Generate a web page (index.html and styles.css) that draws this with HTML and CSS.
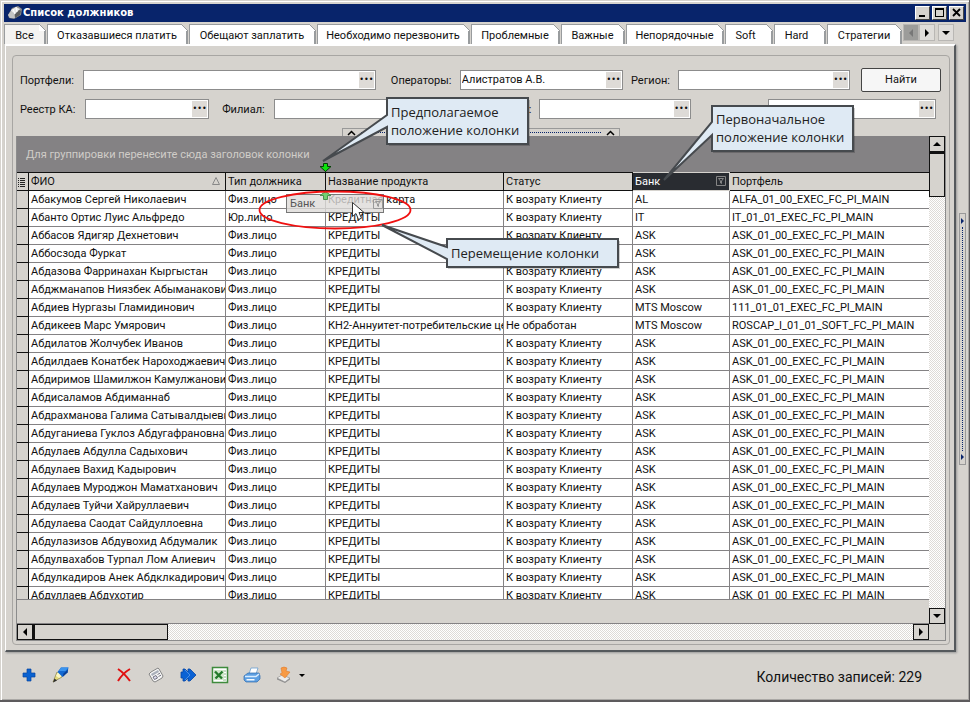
FILE: index.html
```html
<!DOCTYPE html>
<html lang="ru">
<head>
<meta charset="utf-8">
<title>Список должников</title>
<link rel="stylesheet" href="styles.css">
</head>
<body>
<div class="window">
  <header class="titlebar">
    <svg class="app-icon" width="16" height="16" viewBox="0 0 16 16"><path d="M1 10L5 3l6-2 4 3-1 6-7 4-5-1z" fill="#8d8d8d"/><path d="M4 5l5-3 4 2-4 5-4 1z" fill="#e9e9e9"/><path d="M1 10l3-4 3 2 1 5-5 0z" fill="#c4c4c4"/><path d="M8 9l4-4 2 1-1 4-5 3z" fill="#5d5d5d"/><path d="M6 4l2 5M9 2l1 5" stroke="#fff" fill="none"/></svg>
    <h1>Список должников</h1>
    <div class="winbtns">
      <button aria-label="Свернуть"><svg width="14" height="12" viewBox="0 0 14 12"><path d="M3 8h6v2H3z"/></svg></button>
      <button aria-label="Развернуть"><svg width="14" height="12" viewBox="0 0 14 12"><path d="M2 1h9v9H2zM3 3v6h7V3z" fill-rule="evenodd"/></svg></button>
      <button class="close" aria-label="Закрыть"><svg width="14" height="12" viewBox="0 0 14 12"><path d="M3 2l7 7M10 2l-7 7" stroke="#000" stroke-width="1.8"/></svg></button>
    </div>
  </header>
  <nav class="tabs">
    <button class="tab t1 active">Все</button>
    <button class="tab t2">Отказавшиеся платить</button>
    <button class="tab t3">Обещают заплатить</button>
    <button class="tab t4">Необходимо перезвонить</button>
    <button class="tab t5">Проблемные</button>
    <button class="tab t6">Важные</button>
    <button class="tab t7">Непорядочные</button>
    <button class="tab t8">Soft</button>
    <button class="tab t9">Hard</button>
    <button class="tab t10">Стратегии</button>
    <div class="tabnav">
      <button class="off" aria-label="Назад"><svg width="14" height="14" viewBox="0 0 14 14"><path d="M9 3v8L5 7z" fill="#777"/></svg></button>
      <button aria-label="Вперёд"><svg width="14" height="14" viewBox="0 0 14 14"><path d="M5 3v8l4-4z"/></svg></button>
      <button class="list" aria-label="Список вкладок"><svg width="14" height="14" viewBox="0 0 14 14"><path d="M3 5h8L7 9z"/></svg></button>
    </div>
  </nav>
  <div class="middle">
    <main class="panel">
      <section class="group">
        <form class="filters">
          <div class="frow">
            <label class="l1" for="f1">Портфели:</label>
            <div class="field w1"><input id="f1"><button type="button" aria-label="Выбрать портфели">•••</button></div>
            <label class="l2" for="f2">Операторы:</label>
            <div class="field w2"><input id="f2" value="Алистратов А.В."><button type="button" aria-label="Выбрать операторов">•••</button></div>
            <label class="l3" for="f3">Регион:</label>
            <div class="field w3"><input id="f3"><button type="button" aria-label="Выбрать регион">•••</button></div>
            <button class="find" type="submit">Найти</button>
          </div>
          <div class="frow second">
            <label class="l4" for="f4">Реестр КА:</label>
            <div class="field w4"><input id="f4"><button type="button" aria-label="Выбрать реестр">•••</button></div>
            <label class="l5" for="f5">Филиал:</label>
            <div class="field w5"><input id="f5"><button type="button" aria-label="Выбрать филиал">•••</button></div>
            <label class="l6" for="f6">Статус:</label>
            <div class="field w6"><input id="f6"><button type="button" aria-label="Выбрать статус">•••</button></div>
            <label class="l7" for="f7">Группа:</label>
            <div class="field w7"><input id="f7"><button type="button" aria-label="Выбрать группу">•••</button></div>
          </div>
        </form>
        <button class="hsplit" aria-label="Скрыть фильтры"><svg width="9" height="6" viewBox="0 0 9 6"><path d="M1 5l3.500-3.500L8 5" stroke="#000" stroke-width="1.500" fill="none"/></svg><i></i><svg width="9" height="6" viewBox="0 0 9 6"><path d="M1 5l3.500-3.500L8 5" stroke="#000" stroke-width="1.500" fill="none"/></svg></button>
        <div class="grid">
          <div class="gridmain">
            <div class="groupby">Для группировки перенесите сюда заголовок колонки</div>
            <div class="rows">
              <table>
                <colgroup><col class="c0"><col class="c1"><col class="c2"><col class="c3"><col class="c4"><col class="c5"><col></colgroup>
                <thead><tr>
                  <th><svg width="10" height="12" viewBox="0 0 10 12"><path d="M1 2.500h1M1 4.500h1M1 6.500h1M1 8.500h1M1 10.500h1M3 2.500h5M3 4.500h5M3 6.500h5M3 8.500h5M3 10.500h5" stroke="#222"/></svg></th>
                  <th><span>ФИО</span><svg class="sort" width="8" height="8" viewBox="0 0 8 8"><path d="M4 .5L7.500 7.500H.5z" fill="none" stroke="#888"/></svg></th>
                  <th>Тип должника</th><th>Название продукта</th><th>Статус</th>
                  <th class="moving"><span>Банк</span><svg class="filter" width="10" height="10" viewBox="0 0 10 10"><path d="M.5.5h9v9h-9zM2.500 2.500h5L5.500 5v2.500L4.500 7V5z" fill="none" stroke="#858585"/></svg></th>
                  <th>Портфель</th>
                </tr></thead>
                <tbody id="body"></tbody>
              </table>
            </div>
            <div class="hscroll">
              <button aria-label="Влево"><svg width="14" height="14" viewBox="0 0 14 14"><path d="M9 3v8L5 7z"/></svg></button>
              <div class="thumb"></div><div class="track"></div>
              <button aria-label="Вправо"><svg width="14" height="14" viewBox="0 0 14 14"><path d="M5 3v8l4-4z"/></svg></button>
            </div>
          </div>
          <div class="vscroll">
            <button aria-label="Вверх"><svg width="14" height="14" viewBox="0 0 14 14"><path d="M3 9h8L7 5z"/></svg></button>
            <div class="thumb"></div><div class="track"></div>
            <button aria-label="Вниз"><svg width="14" height="14" viewBox="0 0 14 14"><path d="M3 5h8L7 9z"/></svg></button>
            <div class="corner"></div>
          </div>
        </div>
      </section>
    </main>
    <button class="vsplit" aria-label="Боковая панель"><svg width="5" height="8" viewBox="0 0 5 8"><path d="M1 1v6l3-3z" fill="#08246b"/></svg><i></i><svg width="5" height="8" viewBox="0 0 5 8"><path d="M1 1v6l3-3z" fill="#08246b"/></svg></button>
  </div>
  <footer class="toolbar">
    <button aria-label="Добавить"><svg width="18" height="18" viewBox="0 0 18 18"><path d="M7 3h4v4h4v4h-4v4H7v-4H3V7h4z" fill="#0a62d0" stroke="#0646a0" stroke-width=".7"/></svg></button>
    <button aria-label="Изменить"><svg width="18" height="18" viewBox="0 0 18 18"><path d="M1 16L5 6l5 5z" fill="#e6dc7c" stroke="#77703c" stroke-width=".6"/><path d="M4 10l2-4 4 4-3 2z" fill="#faf6c4"/><path d="M1 16.500l1.500-4 2.500 2z" fill="#2b2b2b"/><path d="M5.500 6L9 1.500l7.500 0-1 5-5 4.500z" fill="#1268d2"/><path d="M9 1.500h7.500l-3 3.500H7z" fill="#3b94ee"/><path d="M10.500 11l5-4.500.5-3-4.500 4z" fill="#0a3f94"/></svg></button>
    <button class="gap" aria-label="Удалить"><svg width="18" height="18" viewBox="0 0 18 18"><path d="M3 3q6 4 12 12M15 3Q8 7 3 15" fill="none" stroke="#e01010" stroke-width="2"/></svg></button>
    <button aria-label="Карточка"><svg width="18" height="18" viewBox="0 0 18 18"><path d="M2 8q1-1 2-2l7-4 1 1 4 7-1 2-7 4-2-1z" fill="#f5f5f5" stroke="#858585"/><path d="M4 8l7-4 1 2-7 4z" fill="#a9afba"/><path d="M6 11l3-1.500 1.500 2.500-3 1.500zM10.500 8.500l2.500-1.300M11.500 10.500l2.500-1.300" fill="#dde" stroke="#667" stroke-width=".9"/></svg></button>
    <button aria-label="Передать"><svg width="18" height="18" viewBox="0 0 18 18"><path d="M2 6h2V3l2 0 3 3V3l2 0 6 6-6 6H9v-3l-3 3H4v-3H2z" fill="#0b62d4" stroke="#0748a4" stroke-width=".8"/><path d="M6 4l5 5-5 5" fill="none" stroke="#5b9bea" stroke-width=".8"/></svg></button>
    <button aria-label="Экспорт в Excel"><svg width="18" height="18" viewBox="0 0 18 18"><path d="M1.500 1.500h15v15h-15z" fill="#fff" stroke="#3f8b3d" stroke-width="1.500"/><path d="M12 5h3M12 8h3M12 11h3M12 14h3" stroke="#8ab788"/><path d="M3 4h10v10H3z" fill="#cfe7ca"/><path d="M4 5.500l7 7M11.500 5.500l-7 7" stroke="#237a2b" stroke-width="2.400"/></svg></button>
    <button aria-label="Печать"><svg width="18" height="18" viewBox="0 0 18 18"><path d="M6 8l2-6h7l-2 6z" fill="#fff" stroke="#6b9fd0" stroke-width=".8"/><path d="M1 10l4-3h11l1 3v3l-3 3H3l-2-2z" fill="#5d9fe2" stroke="#2f6cae" stroke-width=".7"/><path d="M2 10.500h11l3-2.500" fill="none" stroke="#d8ecff" stroke-width="1.500"/><path d="M3.500 13h8v1.500h-8z" fill="#f7fbff"/></svg></button>
    <button class="menu" aria-label="Выгрузить"><svg width="32" height="18" viewBox="0 0 32 18"><path d="M2 12l5-3 8 3-5 4z" fill="#ececec" stroke="#999" stroke-width=".7"/><path d="M2 12v1.500l8 3.500 5-3.500V12l-5 4z" fill="#8f8f8f"/><path d="M6 2q3-2 6 0l-1 3 4 1-5 6-5-4 2-1z" fill="#f79a45" stroke="#dc7320" stroke-width=".5"/><path d="M24 8h6l-3 3z"/></svg></button>
    <p>Количество записей: 229</p>
  </footer>
  <div class="ghost">Банк<svg width="10" height="10" viewBox="0 0 10 10"><path d="M.5.5h9v9h-9zM2.500 2.500h5L5.500 5v2.500L4.500 7V5z" fill="none" stroke="#999"/></svg></div>
  <svg class="marks" width="970" height="300" viewBox="0 0 970 300">
    <path d="M325.500 170v20" stroke="#111"/>
    <path d="M323.500 163.500h4v3h3.500l-5.500 5-5.500-5h3.500z" fill="#0ce30c" stroke="#053f05"/>
    <path d="M323.500 199.500h4v-4h3.500l-5.500-4-5.500 4h3.500z" fill="#72cf72" stroke="#4c904c"/>
    <ellipse cx="335" cy="210" rx="75.500" ry="18.500" fill="none" stroke="#f01010" stroke-width="1.800"/>
    <path d="M352.500 202.500v14l3.500-3 2.500 6 3-1.300-2.500-5.700h5z" fill="#fff" stroke="#333"/>
    <path class="shade" d="M389 100h141v46H389zM448 241h172v28H448zM713 108h142v45H713z"/>
    <g fill="#dfeaf4" stroke="#464a4e" stroke-width="2">
      <path d="M387 98h141v46H387V127L323 161l64-46z"/>
      <path d="M712 106h141v45H712V135L664 180l48-58z"/>
      <path d="M447 239h171v28H447V259L382 225l65 22z"/>
    </g>
  </svg>
  <p class="note n1">Предполагаемое<br>положение колонки</p>
  <p class="note n2">Первоначальное<br>положение колонки</p>
  <p class="note n3">Перемещение колонки</p>
</div>
<script src="rows.js"></script>
</body>
</html>
```

FILE: styles.css
```css
* { box-sizing: border-box; }
body { margin: 0; font: 11px/16px Roboto, "Liberation Sans", sans-serif; color: #111; background: #d6d3ce; }
button, input { font: inherit; color: inherit; padding: 0; margin: 0; }
button { border: 0; background: none; display: flex; align-items: center; justify-content: center; }
svg { display: block; flex: none; }
p, h1 { margin: 0; }
.window { position: relative; display: flex; flex-direction: column; height: 100vh; min-width: 900px; padding: 4px 3px 0 4px; border: solid #5d5b5d; border-width: 0 1px 2px 0; box-shadow: inset 1px 1px #d6d3ce, inset 2px 2px #fff, inset -1px -1px #aaa8a5; overflow: hidden; }
.titlebar { display: flex; align-items: center; height: 18px; background: #08246b; color: #fff; padding: 0 2px 0 3px; }
.titlebar h1 { flex: 1; font: bold 10px/18px "DejaVu Sans", sans-serif; }
.winbtns { display: flex; gap: 2px; }
.winbtns button { width: 15px; height: 14px; background: #d6d3ce; border: 1px solid; border-color: #fff #444 #444 #fff; }
.tabs { display: flex; height: 22px; padding-top: 2px; }
.tab { flex: none; white-space: nowrap; height: 20px; border: solid #999c9e; border-width: 1px 2px 0 1px; background: #fff; margin-right: 1px; position: relative; padding-top: 2px; }
.tab::after { content: ""; position: absolute; right: -2px; top: -1px; width: 7px; height: 7px; background: linear-gradient(45deg, #fff 46%, #999c9e 46%, #999c9e 56%, #d6d3ce 56%); }
.tab.active { background: #f4f3f1; }
.t1 { width: 42px; } .t2 { width: 141px; } .t3 { width: 127px; } .t4 { width: 153px; } .t5 { width: 89px; } .t6 { width: 64px; } .t7 { width: 98px; } .t8 { width: 48px; padding-right: 6px; } .t9 { width: 52px; padding-right: 6px; } .t10 { width: 75px; }
.tabnav { display: flex; }
.tabnav button { width: 16px; height: 17px; border: 1px solid #b9b7b4; background: #dfddda; }
.tabnav .off { background: #9c9c9a; }
.tabnav .list { margin-left: 3px; }
.middle { flex: 1; min-height: 0; display: flex; }
.panel { flex: 1; min-width: 0; margin: 0 0 0 1px; padding: 9px 4px 5px 6px; border: solid; border-width: 2px 2px 2px 1px; border-color: #fff #55595c #55595c #fff; box-shadow: 1px 1px 2px #999; display: flex; }
.group { flex: 1; min-width: 0; border: 1px solid #a8a6a3; border-radius: 4px; padding: 12px 3px 3px; display: flex; flex-direction: column; }
.frow { display: flex; align-items: center; height: 24px; padding: 0 5px 0 4px; }
.frow.second { margin-top: 5px; padding-right: 10px; }
.field { display: flex; height: 20px; border: 1px solid #8c8c8c; background: #fff; padding: 1px; min-width: 0; }
.field input { flex: 1; min-width: 0; width: 0; border: 0; background: none; outline: 0; }
.field button { width: 15px; background: #dedbd7; font: 8px/12px "DejaVu Sans", sans-serif; }
.frow label { flex: none; white-space: nowrap; padding-top: 2px; }
.frow .l1 { width: 63px; } .frow .l2 { width: 84px; padding-left: 15px; } .frow .l3 { width: 55px; padding-left: 8px; }
.w1 { flex: 294; } .w2 { flex: 162; } .w3 { flex: 171; }
.find { width: 80px; height: 24px; margin-left: 11px; border: 1px solid #444; border-radius: 2px; background: #f6f6f6; }
.frow .l4 { width: 65px; } .frow .l5 { width: 65px; padding-left: 13px; } .frow .l6 { width: 66px; padding-right: 8px; text-align: right; } .frow .l7 { width: 77px; padding-left: 22px; }
.w4 { flex: 123; } .w5 { flex: 200; } .w6 { flex: 151; } .w7 { flex: 168; }
.hsplit { align-self: center; width: 278px; height: 8px; margin-top: 7px; border: 1px solid #999; border-bottom: 0; padding: 0 4px; }
.hsplit i { flex: 1; border-top: 1px dotted #08246b; margin: 0 5px; }
.grid { flex: 1; min-height: 0; display: flex; border: solid #8c8c8c; border-width: 0 1px 1px; background: #d6d3ce; }
.gridmain { flex: 1; min-width: 0; display: flex; flex-direction: column; }
.groupby { height: 36px; padding: 0 9px; background: #848284; color: #d0cdc8; line-height: 38px; }
.rows { flex: 1; min-height: 0; overflow: hidden; margin-bottom: 23px; border-bottom: 1px solid #848284; }
table { width: 100%; table-layout: fixed; border-collapse: separate; border-spacing: 0; }
.c0 { width: 12px; } .c1 { width: 197px; } .c2 { width: 100px; } .c3 { width: 178px; } .c4 { width: 129px; } .c5 { width: 97px; }
th, td { height: 18px; padding: 0 0 0 2px; white-space: nowrap; overflow: hidden; text-align: left; font-weight: 400; line-height: 17px; }
td { background: #fff; border: solid #848284; border-width: 0 1px 1px 0; }
th { height: 19px; background: #d6d3ce; border: solid #111; border-width: 1px 1px 1px 0; }
td:first-child { background: #d6d3ce; border-color: #111; }
td:last-child, th:last-child { border-right: 0; }
th:first-child { padding: 0; }
th span { float: left; }
th .sort { float: right; margin: 4px 5px 0 0; }
th .filter { float: right; margin: 3px 3px 0 0; }
th.moving { background: #292c31; color: #fff; border-color: #d6d3ce; }
.hscroll { display: flex; height: 17px; border-top: 1px solid #848284; }
.hscroll button, .vscroll button { flex: none; width: 16px; height: 16px; border: 1px solid #111; background: #d6d3ce; }
.hscroll .thumb { width: 135px; border: 1px solid #111; border-left-width: 2px; background: #d6d3ce; }
.track { flex: 1; background: repeating-conic-gradient(#fff 0 25%, #dedbd7 0 50%) 0 0 / 2px 2px; }
.vscroll { width: 16px; display: flex; flex-direction: column; }
.vscroll .thumb { height: 45px; border: 1px solid #111; border-top-width: 2px; background: #d6d3ce; }
.corner { height: 16px; }
.vsplit { width: 7px; height: 252px; align-self: flex-start; flex-direction: column; margin: 169px 0 0 3px; border: 1px solid #999; padding: 3px 0; }
.vsplit i { flex: 1; border-left: 1px dotted #08246b; margin: 2px 0; }
.toolbar { height: 48px; display: flex; align-items: center; padding: 0 44px 2px 16px; gap: 14px; }
.toolbar .gap { margin-left: 31px; }
.toolbar p { margin-left: auto; font-size: 14px; padding-top: 3px; }
.ghost { position: absolute; left: 286px; top: 194px; width: 98px; height: 19px; border: 1px solid #777; background: #dddbd8cc; color: #555; padding-left: 3px; display: flex; justify-content: space-between; align-items: center; }
.marks { position: absolute; left: 0; top: 0; pointer-events: none; }
.shade { fill: #00000030; }
.note { position: absolute; font: 13px/18px "Open Sans", sans-serif; color: #222; white-space: nowrap; }
.n1 { left: 391px; top: 103px; } .n2 { left: 716px; top: 110px; } .n3 { left: 451px; top: 244px; }
```

FILE: rows.js
```js
const ask = 'ASK_01_00_EXEC_FC_PI_MAIN';
const special = {
  0: { product: 'Кредитная карта', bank: 'AL', portfolio: 'ALFA_01_00_EXEC_FC_PI_MAIN' },
  1: { type: 'Юр.лицо', bank: 'IT', portfolio: 'IT_01_01_EXEC_FC_PI_MAIN' },
  6: { bank: 'MTS Moscow', portfolio: '111_01_01_EXEC_FC_PI_MAIN' },
  7: { product: 'КН2-Аннуитет-потребительские цели', status: 'Не обработан', bank: 'MTS Moscow', portfolio: 'ROSCAP_I_01_01_SOFT_FC_PI_MAIN' }
};
const names = ['Абакумов Сергей Николаевич', 'Абанто Ортис Луис Альфредо', 'Аббасов Ядигяр Дехнетович', 'Аббосзода Фуркат', 'Абдазова Фарринахан Кыргыстан', 'Абджманапов Ниязбек Абыманакович', 'Абдиев Нургазы Гламидинович', 'Абдикеев Марс Умярович', 'Абдилатов Жолчубек Иванов', 'Абдилдаев Конатбек Нароходжаевич', 'Абдиримов Шамилжон Камулжанович', 'Абдисаламов Абдиманнаб', 'Абдрахманова Галима Сатывалдыевна', 'Абдуганиева Гуклоз Абдугафрановна', 'Абдулаев Абдулла Садыхович', 'Абдулаев Вахид Кадырович', 'Абдулаев Муроджон Маматханович', 'Абдулаев Туйчи Хайруллаевич', 'Абдулаева Саодат Сайдуллоевна', 'Абдулазизов Абдувохид Абдумалик', 'Абдулвахабов Турпал Лом Алиевич', 'Абдулкадиров Анек Абдклкадирович', 'Абдуллаев Абдухотир'];
const body = document.getElementById('body');
names.forEach((name, i) => {
  const r = Object.assign({ type: 'Физ.лицо', product: 'КРЕДИТЫ', status: 'К возрату Клиенту', bank: 'ASK', portfolio: ask }, special[i]);
  const tr = body.insertRow();
  ['', name, r.type, r.product, r.status, r.bank, r.portfolio].forEach(t => { tr.insertCell().textContent = t; });
});
```
